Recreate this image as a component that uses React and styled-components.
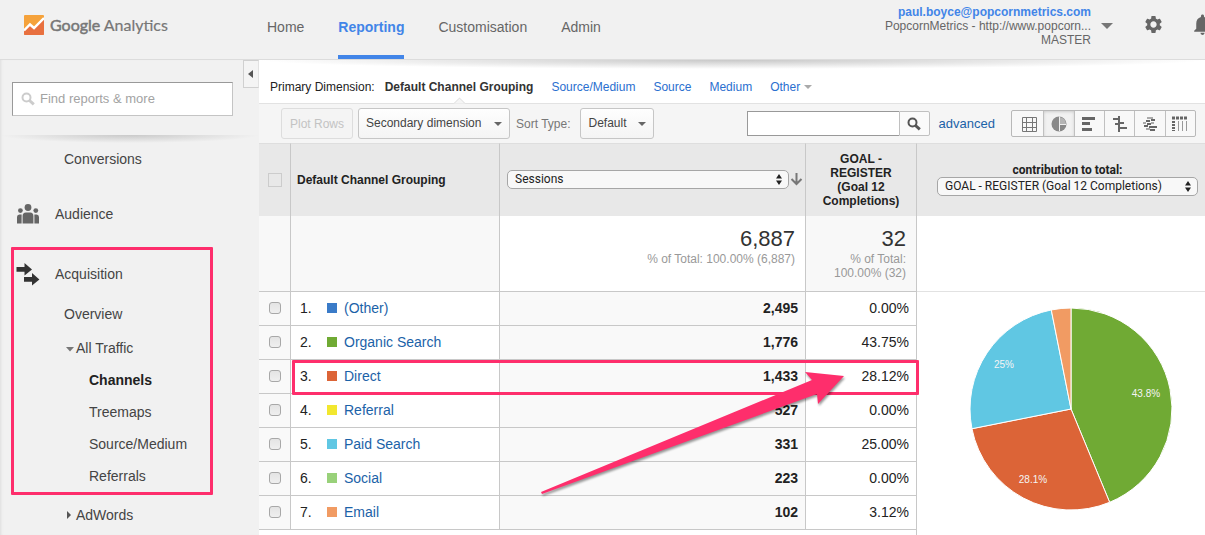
import React from 'react';
import styled, { createGlobalStyle } from 'styled-components';
import { MdSettings, MdNotifications } from 'react-icons/md';

const GlobalStyle = createGlobalStyle`
  * {
    box-sizing: border-box;
  }

  body {
    margin: 0;
    background: #fff;
    color: #222;
    font-family: "Liberation Sans", Arial, sans-serif;
    font-size: 12px;
    line-height: 14px;
  }

  button, input, select {
    margin: 0;
    font: inherit;
    color: inherit;
  }

  a {
    text-decoration: none;
  }

  ul {
    margin: 0;
    padding: 0;
    list-style: none;
  }
`;

const Shell = styled.div`
  display: flex;
  flex-direction: column;
  min-height: 100vh;
`;

/* ---------- header ---------- */

const Header = styled.header`
  display: flex;
  height: 60px;
  background: #f1f1f1;
  border-bottom: 1px solid #dcdcdc;
`;

const Brand = styled.a`
  display: flex;
  align-items: center;
  gap: 6px;
  flex: 0 0 267px;
  height: 50px;
  padding-left: 24px;
  color: #777;
  font-family: Lato, sans-serif;
  font-size: 16px;
  line-height: 20px;
  -webkit-text-stroke: 0.2px #777;
`;

const BrandName = styled.span`
  -webkit-text-stroke: 0.5px #777;
`;

const MainNav = styled.nav`
  display: flex;
  gap: 34px;
  flex: 1;
`;

const NavLink = styled.a`
  height: 59px;
  padding-top: 19px;
  border-bottom: 4px solid ${(p) => (p.$active ? '#4285e8' : 'transparent')};
  color: ${(p) => (p.$active ? '#4285e8' : '#666')};
  font-size: 14px;
  font-weight: ${(p) => (p.$active ? 'bold' : 'normal')};
  line-height: 16px;
`;

const AccountButton = styled.button`
  display: flex;
  align-items: center;
  align-self: flex-start;
  gap: 10px;
  padding: 5px 0 0;
  border: 0;
  background: none;
  color: #666;
  text-align: right;
`;

const AccountLine = styled.span`
  display: block;
`;

const AccountEmail = styled(AccountLine)`
  color: #4285e8;
  font-weight: bold;
`;

const Caret = styled.span`
  display: inline-block;
  width: 0;
  height: 0;
  border: ${(p) => p.$size || 4}px solid transparent;
  border-top-color: ${(p) => p.$color || '#666'};
  border-bottom: 0;
`;

const IconButton = styled.button`
  display: flex;
  align-items: center;
  flex-shrink: 0;
  height: 48px;
  padding: 0;
  border: 0;
  background: none;
  color: #666;
`;

const HeaderIcons = styled.div`
  display: flex;
  gap: 26px;
  width: 62px;
  margin-left: 30px;
  overflow: hidden;
`;

/* ---------- sidebar ---------- */

const Body = styled.div`
  display: flex;
  flex: 1;
`;

const Sidebar = styled.aside`
  flex: 0 0 259px;
  background: #f1f1f1;
  box-shadow: inset 3px 0 3px -2px #ddd;
`;

const SidebarTop = styled.div`
  display: flex;
  align-items: flex-start;
  justify-content: space-between;
  padding-left: 12px;
`;

const ReportSearch = styled.label`
  display: flex;
  align-items: center;
  gap: 5px;
  width: 221px;
  height: 34px;
  margin-top: 22px;
  padding-left: 8px;
  border: 1px solid #c4c4c4;
  border-top-color: #999;
  border-left-color: #999;
  background: #fff;
`;

const ReportSearchInput = styled.input`
  flex: 1;
  min-width: 0;
  border: 0;
  padding: 0;
  background: none;
  outline: 0;
  font-size: 13px;

  &::placeholder {
    color: #a3a3a3;
  }
`;

const CollapseButton = styled.button`
  display: flex;
  align-items: center;
  justify-content: center;
  width: 16px;
  height: 28px;
  padding: 0 2px 0 0;
  border: 1px solid #d0d0d0;
  border-right-color: #e2e2e2;
  background: #f4f4f4;
`;

const SidebarShade = styled.div`
  height: 8px;
  margin-top: 19px;
  background: radial-gradient(ellipse 50% 100% at 50% 0, #c9c9c9, #f1f1f100);
`;

const Section = styled.div`
  display: flex;
  align-items: center;
  height: 48px;
  gap: 15px;
  padding-left: 16px;
  margin-top: ${(p) => p.$space || 0}px;
  font-size: 14px;
`;

const SectionLink = styled.a`
  color: #444;
`;

const indents = { 1: 64, 2: 76, 3: 89 };

const MenuItem = styled.li`
  margin-top: ${(p) => p.$space || 0}px;
`;

const MenuLink = styled.a`
  display: flex;
  align-items: center;
  justify-content: flex-start;
  height: 32px;
  padding-left: ${(p) => indents[p.$level]}px;
  color: ${(p) => (p.$active ? '#222' : '#444')};
  font-size: 14px;
  font-weight: ${(p) => (p.$active ? 'bold' : 'normal')};
`;

const Twisty = styled.svg`
  width: 8px;
  height: 8px;
  margin-left: -10px;
  margin-right: 2px;
`;

const MarkedGroup = styled.div`
  position: relative;
  margin-top: 12px;

  &::after {
    content: '';
    position: absolute;
    inset: -3px 46px -3px 11px;
    border: 3px solid #fe2e6c;
    border-radius: 1px;
    pointer-events: none;
  }
`;

/* ---------- main ---------- */

const Main = styled.main`
  flex: 1;
  min-width: 0;
  background: #fff;
`;

const DimensionBar = styled.div`
  display: flex;
  align-items: flex-end;
  gap: 18px;
  height: 44px;
  padding: 0 0 9px 11px;
  border-bottom: 1px solid #e2e2e2;
  background: radial-gradient(ellipse 50% 9px at 50% 0, #c8c8c8, #ffffff00) no-repeat;
`;

const DimensionLabel = styled.span`
  margin-right: -8px;
`;

const DimensionCurrent = styled.strong`
  position: relative;
  color: #333;

  &::after {
    content: '';
    position: absolute;
    left: 50%;
    bottom: -14px;
    width: 8px;
    height: 8px;
    margin-left: -4px;
    border: 1px solid #ddd;
    border-right: 0;
    border-bottom: 0;
    background: #f5f5f5;
    transform: rotate(45deg);
    clip-path: polygon(0 0, 100% 0, 0 100%);
  }
`;

const DimensionLink = styled.a`
  display: flex;
  align-items: center;
  gap: 4px;
  color: #2a6fcf;
`;

const Toolbar = styled.div`
  display: flex;
  align-items: center;
  height: 39px;
  padding: 0 9px 0 22px;
  background: #f5f5f5;
`;

const PlotButton = styled.button`
  width: 72px;
  height: 31px;
  margin-right: 5px;
  padding: 0;
  border: 1px solid #ddd;
  border-radius: 3px;
  background: #f4f4f4;
  color: #c3c3c3;
`;

const DropBox = styled.span`
  position: relative;
  width: ${(p) => p.$width}px;

  ${Caret} {
    position: absolute;
    right: 8px;
    top: 14px;
    pointer-events: none;
  }
`;

const DropSelect = styled.select`
  display: block;
  width: 100%;
  height: 31px;
  padding: 0 0 1px 7px;
  appearance: none;
  border: 1px solid #c6c6c6;
  border-radius: 3px;
  background: linear-gradient(#fefefe, #f4f4f4);
  color: #444;
`;

const SortLabel = styled.label`
  margin: 0 10px 0 6px;
  color: #777;
`;

const TableSearch = styled.form`
  display: flex;
  height: 25px;
  margin-left: auto;
`;

const TableSearchInput = styled.input`
  width: 152px;
  padding: 0 6px;
  border: 1px solid #999;
  border-right: 0;
  background: #fff;
`;

const TableSearchButton = styled.button`
  display: flex;
  align-items: center;
  justify-content: center;
  width: 31px;
  padding: 0;
  border: 1px solid #c0c0c0;
  border-radius: 0 2px 2px 0;
  background: #fafafa;
`;

const AdvancedLink = styled.a`
  margin: 0 16px 0 9px;
  color: #1b62a8;
  font-size: 13px;
`;

const ViewSwitch = styled.div`
  display: flex;
  width: 185px;
  height: 27px;
  border: 1px solid #b8b8b8;
  border-radius: 2px;
  background: #f8f8f8;
`;

const ViewButton = styled.button`
  display: flex;
  align-items: center;
  justify-content: center;
  flex: 1;
  padding: 0;
  border: 0;
  border-left: 1px solid #c0c0c0;
  background: ${(p) => (p.$active ? '#f1f1f1' : 'none')};
  box-shadow: ${(p) => (p.$active ? 'inset 0 1px 3px #ccc' : 'none')};

  &:first-child {
    padding-left: 2px;
    border-left: 0;
  }
`;

/* ---------- table ---------- */

const TableArea = styled.div`
  position: relative;
`;

const Table = styled.table`
  width: 100%;
  table-layout: fixed;
  border-collapse: separate;
  border-spacing: 0;
`;

const HeadCell = styled.th`
  height: 73px;
  padding: ${(p) => p.$pad || '0 6px'};
  border-top: 1px solid #dedede;
  border-right: 1px solid #c8c8c8;
  background: #e8e8e8;
  text-align: ${(p) => p.$align || 'left'};

  &:last-child {
    border-right: 0;
  }
`;

const HeadFlex = styled.div`
  display: flex;
  align-items: center;
  gap: 1px;
`;

const TotalCell = styled.td`
  height: 76px;
  padding: 11px 10px 0;
  border-right: 1px solid #c8c8c8;
  border-bottom: 1px solid #c8c8c8;
  background: ${(p) => (p.$tinted ? '#f8f8f8' : '#fff')};
  color: #999;
  text-align: right;
  vertical-align: top;

  &:last-child {
    border-right: 0;
    border-bottom-color: #e2e2e2;
  }
`;

const TotalValue = styled.div`
  margin-bottom: 1px;
  color: #333;
  font-size: 22px;
  line-height: 24px;
`;

const Cell = styled.td`
  height: 34px;
  padding: 0 7px 2px 9px;
  border-right: 1px solid #c8c8c8;
  border-bottom: 1px solid #c8c8c8;
  background: ${(p) => (p.$tinted ? '#f9f9f9' : '#fff')};
  font-size: 14px;
  font-weight: ${(p) => (p.$strong ? 'bold' : 'normal')};
  text-align: ${(p) => (p.$number ? 'right' : 'left')};
`;

const Row = styled.tr`
  position: relative;
`;

/* frame over the whole row, up to the chart column */
const RowMark = styled.span`
  position: absolute;
  inset: 0 286px -1px 33px;
  z-index: 1;
  border: 3px solid #fe2e6c;
  border-radius: 1px;
  pointer-events: none;
`;

const TailCell = styled.td`
  height: 5px;
  padding: 0;
  border-right: 1px solid #c8c8c8;
`;

const ChartCell = styled.td`
  padding: 15px 0 0 52px;
  vertical-align: top;
`;

const NameFlex = styled.div`
  display: flex;
  align-items: center;
`;

const RowNumber = styled.span`
  width: 27px;
`;

const Swatch = styled.span`
  width: 10px;
  height: 10px;
  margin-right: 7px;
  background: ${(p) => p.$color};
`;

const ChannelLink = styled.a`
  color: #1b62a8;
`;

const Tick = styled.input`
  display: block;
  width: 12px;
  height: 12px;
  margin-left: ${(p) => (p.$head ? 3 : 1)}px;
  appearance: none;
  border: 1px solid #a8a8a8;
  border-radius: 3px;
  background: linear-gradient(#e4e4e4, #efefef);

  &:disabled {
    width: 14px;
    height: 14px;
    border-color: #ccc;
    border-radius: 0;
    background: none;
  }
`;

const MacBox = styled.span`
  position: relative;
  display: block;
  flex: 1;

  svg {
    position: absolute;
    right: 6px;
    top: 4px;
    pointer-events: none;
  }
`;

const MacSelect = styled.select`
  display: block;
  width: 100%;
  height: 19px;
  padding: 0 0 1px 7px;
  appearance: none;
  border: 1px solid #a6a6a6;
  border-radius: 5px;
  background: #f8f8f8;
  color: #222;
  font-family: Roboto, sans-serif;
  font-weight: normal;
`;

const ContributionLabel = styled.label`
  display: block;
  font-family: Roboto, sans-serif;
  text-align: center;
`;

const Pointer = styled.svg`
  position: absolute;
  right: 357px;
  top: 225px;
  z-index: 2;
  pointer-events: none;
  filter: drop-shadow(1px 2px 1px #0006);
`;

const channels = [
  { name: '(Other)', color: '#3a7bc8', sessions: '2,495', goal: '0.00%' },
  { name: 'Organic Search', color: '#70aa34', sessions: '1,776', goal: '43.75%' },
  { name: 'Direct', color: '#dc6437', sessions: '1,433', goal: '28.12%', marked: true },
  { name: 'Referral', color: '#f2e72f', sessions: '527', goal: '0.00%' },
  { name: 'Paid Search', color: '#60c7e3', sessions: '331', goal: '25.00%' },
  { name: 'Social', color: '#99d17a', sessions: '223', goal: '0.00%' },
  { name: 'Email', color: '#f19b63', sessions: '102', goal: '3.12%' },
];

const slices = [
  { share: 0.4375, color: '#70aa34', label: '43.8%', x: 177, y: 90 },
  { share: 0.28125, color: '#dc6437', label: '28.1%', x: 64, y: 176 },
  { share: 0.25, color: '#60c7e3', label: '25%', x: 35, y: 61 },
  { share: 0.03125, color: '#f19b63' },
];

const point = (turn) => {
  const a = turn * Math.PI * 2;
  return `${102 + 101 * Math.sin(a)} ${102 - 101 * Math.cos(a)}`;
};

const Pie = () => {
  let from = 0;
  return (
    <svg width="204" height="204" viewBox="0 0 204 204" role="img" aria-label="Contribution to total">
      {slices.map((s) => {
        const start = from;
        from += s.share;
        return (
          <path
            key={s.color}
            d={`M102 102 L${point(start)} A101 101 0 0 1 ${point(from)} Z`}
            fill={s.color}
            stroke="#fff"
            strokeWidth="1"
          />
        );
      })}
      {slices.filter((s) => s.label).map((s) => (
        <text key={s.label} x={s.x} y={s.y} fill="#f4f4f4" fontSize="10" textAnchor="middle">
          {s.label}
        </text>
      ))}
    </svg>
  );
};

const BrandMark = () => (
  <svg width="20" height="20" viewBox="0 0 20 20">
    <rect width="20" height="20" rx="1" fill="#f5a23b" />
    <path d="M0 15 L6 10 L10 13 L20 3 V19 Q20 20 19 20 H1 Q0 20 0 19 Z" fill="#e8703f" />
    <path d="M0 15.5 L6 9.5 L10 13 L20 3" fill="none" stroke="#fff" strokeWidth="2.4" />
  </svg>
);

const Magnifier = ({ color, size = 14 }) => (
  <svg width={size} height={size} viewBox="0 0 14 14" fill="none" stroke={color}>
    <circle cx="5.5" cy="5.5" r="4" strokeWidth="2" />
    <path d="M8.5 8.5 L12.8 12.4" strokeWidth="3" />
  </svg>
);

const AudienceIcon = () => (
  <svg width="24" height="22" viewBox="0 0 24 22" fill="#666">
    <circle cx="12" cy="4.5" r="3.4" />
    <circle cx="4.4" cy="7.6" r="2.4" />
    <circle cx="19.8" cy="7.6" r="2.4" />
    <path d="M6.6 20.5 V13 Q6.6 9.5 10 9.5 H14.2 Q17.4 9.5 17.4 13 V20.5 Z" />
    <path d="M1 20.5 V14 Q1 11.5 3.4 11.5 H5.6 V20.5 Z" />
    <path d="M18.4 20.5 V11.5 H20.6 Q23 11.5 23 14 V20.5 Z" />
  </svg>
);

const AcquisitionIcon = () => (
  <svg width="24" height="24" viewBox="0 0 24 24" fill="#333">
    <path d="M0.5 5 H8.5 V1 L16 7.4 L8.5 13.6 V9.8 H0.5 Z" />
    <path d="M8 15 H16 V11 L23.4 17.4 L16 23.6 V19.8 H8 Z" />
  </svg>
);

const UpDown = () => (
  <svg width="8" height="11" viewBox="0 0 8 11" fill="#222">
    <path d="M4 0 L7 4.4 H1 Z M4 11 L1 6.6 H7 Z" />
  </svg>
);

const SortArrow = () => (
  <svg width="13" height="14" viewBox="0 0 13 14" fill="none" stroke="#777" strokeWidth="2">
    <path d="M6.5 1 V12 M1.5 7 L6.5 12 L11.5 7" />
  </svg>
);

const views = [
  {
    name: 'Data',
    art: (
      <path
        d="M2.5 2.5 H16.5 V16.5 H2.5 Z M2.5 7.5 H16.5 M2.5 12.5 H16.5 M6.5 2.5 V16.5 M12.5 2.5 V16.5"
        fill="none"
        stroke="#777"
      />
    ),
  },
  {
    name: 'Percentage',
    art: (
      <g>
        <circle cx="9" cy="9" r="7.5" fill="#888" />
        <path d="M9.5 9 V2 A7 7 0 0 1 16 9 Z" fill="#b4b4b4" />
        <path d="M9.5 1.5 V16 M9.5 9.5 H16" fill="none" stroke="#eee" />
      </g>
    ),
  },
  {
    name: 'Performance',
    art: <path d="M2 2 H15 V5 H2 Z M2 7 H10 V10 H2 Z M2 13 H12 V16 H2 Z" fill="#666" />,
  },
  {
    name: 'Comparison',
    art: <path d="M2 3 H7 V1 H9 V17 H7 V5 H2 Z M9 7 H13 V9 H9 Z M4 8 H7 V10 H4 Z M9 12 H16 V14 H9 Z" fill="#666" />,
  },
  {
    name: 'Term Cloud',
    art: (
      <g fill="none" strokeWidth="2">
        <path d="M6 3 H12 M2 8 H5 M10 8 H13 M5 14 H9" stroke="#aaa" />
        <path d="M5 6 H9 M10 5 H14 M6 9 H10 M3 11 H7 M8 12 H16 M9 15 H14" stroke="#666" />
      </g>
    ),
  },
  {
    name: 'Pivot',
    art: (
      <g fill="none" stroke="#666">
        <path d="M1 3 H17" strokeWidth="3" strokeDasharray="3 1" />
        <path d="M2.5 6 V16" strokeWidth="3" strokeDasharray="2 1" />
        <path d="M7.5 6 V16 M11.5 6 V16 M15.5 6 V16" stroke="#999" />
      </g>
    ),
  },
];

const App = () => {
  return (
    <Shell>
      <GlobalStyle />
      <Header>
        <Brand href="#">
          <BrandMark />
          <span>
            <BrandName>Google</BrandName> Analytics
          </span>
        </Brand>
        <MainNav>
          <NavLink href="#">Home</NavLink>
          <NavLink href="#" $active>Reporting</NavLink>
          <NavLink href="#">Customisation</NavLink>
          <NavLink href="#">Admin</NavLink>
        </MainNav>
        <AccountButton type="button">
          <span>
            <AccountEmail>paul.boyce@popcornmetrics.com</AccountEmail>
            <AccountLine>PopcornMetrics - http://www.popcorn...</AccountLine>
            <AccountLine>MASTER</AccountLine>
          </span>
          <Caret $size={6} $color="#777" />
        </AccountButton>
        <HeaderIcons>
          <IconButton type="button" aria-label="Settings">
            <MdSettings size={21} />
          </IconButton>
          <IconButton type="button" aria-label="Notifications">
            <MdNotifications size={25} />
          </IconButton>
        </HeaderIcons>
      </Header>

      <Body>
        <Sidebar>
          <SidebarTop>
            <ReportSearch>
              <Magnifier color="#ccc" />
              <ReportSearchInput type="text" aria-label="Find reports" placeholder="Find reports &amp; more" />
            </ReportSearch>
            <CollapseButton type="button" aria-label="Collapse">
              <svg width="5" height="8" viewBox="0 0 5 8" fill="#555">
                <path d="M5 0 V8 L0 4 Z" />
              </svg>
            </CollapseButton>
          </SidebarTop>
          <SidebarShade />
          <nav>
            <MenuLink href="#" $level={1}>Conversions</MenuLink>
            <Section $space={15}>
              <AudienceIcon />
              <SectionLink href="#">Audience</SectionLink>
            </Section>
            <MarkedGroup>
              <Section>
                <AcquisitionIcon />
                <SectionLink href="#">Acquisition</SectionLink>
              </Section>
              <ul>
                <MenuItem>
                  <MenuLink href="#" $level={1}>Overview</MenuLink>
                </MenuItem>
                <MenuItem $space={2}>
                  <MenuLink href="#" $level={2}>
                    <Twisty viewBox="0 0 8 8" fill="#777">
                      <path d="M0 3 H8 L4 7.5 Z" />
                    </Twisty>
                    All Traffic
                  </MenuLink>
                </MenuItem>
                <MenuItem>
                  <MenuLink href="#" $level={3} $active>Channels</MenuLink>
                </MenuItem>
                <MenuItem>
                  <MenuLink href="#" $level={3}>Treemaps</MenuLink>
                </MenuItem>
                <MenuItem>
                  <MenuLink href="#" $level={3}>Source/Medium</MenuLink>
                </MenuItem>
                <MenuItem>
                  <MenuLink href="#" $level={3}>Referrals</MenuLink>
                </MenuItem>
              </ul>
            </MarkedGroup>
            <ul>
              <MenuItem $space={7}>
                <MenuLink href="#" $level={2}>
                  <Twisty viewBox="0 0 8 8" fill="#555">
                    <path d="M1 0 V8 L5 4 Z" />
                  </Twisty>
                  AdWords
                </MenuLink>
              </MenuItem>
            </ul>
          </nav>
        </Sidebar>

        <Main>
          <DimensionBar>
            <DimensionLabel>Primary Dimension:</DimensionLabel>
            <DimensionCurrent>Default Channel Grouping</DimensionCurrent>
            <DimensionLink href="#">Source/Medium</DimensionLink>
            <DimensionLink href="#">Source</DimensionLink>
            <DimensionLink href="#">Medium</DimensionLink>
            <DimensionLink href="#">
              Other <Caret $color="#aaa" />
            </DimensionLink>
          </DimensionBar>

          <Toolbar>
            <PlotButton type="button" disabled>Plot Rows</PlotButton>
            <DropBox $width={152}>
              <DropSelect aria-label="Secondary dimension">
                <option>Secondary dimension</option>
              </DropSelect>
              <Caret />
            </DropBox>
            <SortLabel htmlFor="sort">Sort Type:</SortLabel>
            <DropBox $width={74}>
              <DropSelect id="sort">
                <option>Default</option>
              </DropSelect>
              <Caret />
            </DropBox>
            <TableSearch>
              <TableSearchInput type="text" aria-label="Search table" />
              <TableSearchButton type="button" aria-label="Search">
                <Magnifier color="#555" />
              </TableSearchButton>
            </TableSearch>
            <AdvancedLink href="#">advanced</AdvancedLink>
            <ViewSwitch>
              {views.map((view, index) => (
                <ViewButton key={view.name} type="button" aria-label={view.name} $active={index === 1}>
                  <svg width="18" height="18" viewBox="0 0 18 18">{view.art}</svg>
                </ViewButton>
              ))}
            </ViewSwitch>
          </Toolbar>

          <TableArea>
            <Table>
              <colgroup>
                <col width="32" />
                <col width="209" />
                <col />
                <col width="111" />
                <col width="288" />
              </colgroup>
              <thead>
                <tr>
                  <HeadCell>
                    <Tick type="checkbox" aria-label="Select all" disabled $head />
                  </HeadCell>
                  <HeadCell>Default Channel Grouping</HeadCell>
                  <HeadCell $pad="0 2px 2px 7px">
                    <HeadFlex>
                      <MacBox>
                        <MacSelect aria-label="Metric">
                          <option>Sessions</option>
                        </MacSelect>
                        <UpDown />
                      </MacBox>
                      <SortArrow />
                    </HeadFlex>
                  </HeadCell>
                  <HeadCell $align="center" $pad="0 14px">GOAL - REGISTER (Goal 12 Completions)</HeadCell>
                  <HeadCell $pad="0 7px 2px 20px">
                    <ContributionLabel htmlFor="contribution">contribution to total:</ContributionLabel>
                    <MacBox>
                      <MacSelect id="contribution">
                        <option>GOAL - REGISTER (Goal 12 Completions)</option>
                      </MacSelect>
                      <UpDown />
                    </MacBox>
                  </HeadCell>
                </tr>
              </thead>
              <tbody>
                <tr>
                  <TotalCell $tinted />
                  <TotalCell $tinted />
                  <TotalCell>
                    <TotalValue>6,887</TotalValue>
                    % of Total: 100.00% (6,887)
                  </TotalCell>
                  <TotalCell $tinted>
                    <TotalValue>32</TotalValue>
                    % of Total: 100.00% (32)
                  </TotalCell>
                  <TotalCell />
                </tr>
                {channels.map((channel, index) => (
                  <Row key={channel.name}>
                    <Cell $tinted>
                      <Tick type="checkbox" aria-label={channel.name} />
                      {channel.marked && <RowMark />}
                    </Cell>
                    <Cell>
                      <NameFlex>
                        <RowNumber>{index + 1}.</RowNumber>
                        <Swatch $color={channel.color} />
                        <ChannelLink href="#">{channel.name}</ChannelLink>
                      </NameFlex>
                    </Cell>
                    <Cell $tinted $number $strong>{channel.sessions}</Cell>
                    <Cell $number>{channel.goal}</Cell>
                    {index === 0 && (
                      <ChartCell rowSpan={8}>
                        <Pie />
                      </ChartCell>
                    )}
                  </Row>
                ))}
                <tr>
                  <TailCell colSpan={4} />
                </tr>
              </tbody>
            </Table>
            <Pointer width="311" height="132" viewBox="0 0 311 132">
              <path d="M4 124 L275 12 L268 4 L307 8 L281 36 L280 26 L5 126 Z" fill="#fe2e6c" />
            </Pointer>
          </TableArea>
        </Main>
      </Body>
    </Shell>
  );
};

export default App;
